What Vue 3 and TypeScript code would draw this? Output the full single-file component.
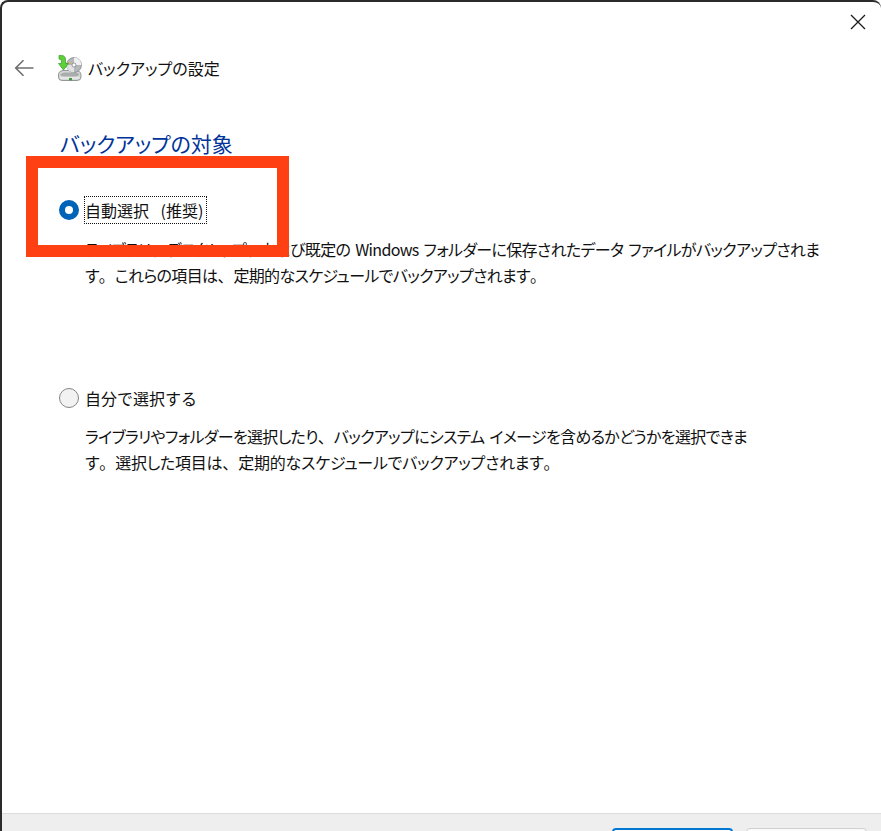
<template>
  <div class="window">
    <div class="close-row">
      <svg class="close" width="16" height="16" viewBox="0 0 16 16">
        <path d="M1 1 L15 15 M15 1 L1 15" stroke="#1a1a1a" stroke-width="1.3" fill="none" />
      </svg>
    </div>

    <div class="title-row">
      <svg class="back" width="20" height="18" viewBox="0 0 20 18">
        <path d="M19.5 9 H2 M9.5 1.2 L1.7 9 L9.5 16.8" stroke="#6f6f6f" stroke-width="1.6" fill="none" />
      </svg>
      <svg class="backup-icon" width="26" height="26" viewBox="0 0 26 26">
        <!-- drive -->
        <path d="M1.5 20 Q1.5 16 6 15.5 H19 Q24 16 24 20 V22 Q24 25.5 20 25.5 H5 Q1.5 25.5 1.5 22 Z" fill="#d5d8d7" stroke="#7d8280" stroke-width="0.8" />
        <path d="M3 19.5 Q5 17.5 8 17.5 H18 Q21 17.5 22.5 19.5 Q21 21.5 18 21.5 H7 Q4 21.5 3 19.5 Z" fill="#a9adac" />
        <path d="M3 23 H22.5" stroke="#f4f5f4" stroke-width="1.2" />
        <rect x="12" y="23" width="3" height="2.4" fill="#3f9a3f" />
        <!-- disc -->
        <circle cx="17" cy="10" r="7.5" fill="#b4b8bb" stroke="#7d8184" stroke-width="0.7" />
        <path d="M17 10 L17 2.5 A7.5 7.5 0 0 1 24.5 10 Z" fill="#eeeff1" />
        <path d="M17 10 L17 17.5 A7.5 7.5 0 0 1 9.5 10 Z" fill="#dfe1e3" />
        <circle cx="17" cy="10" r="2" fill="#fff" stroke="#777" stroke-width="0.7" />
        <circle cx="13" cy="8" r="1" fill="#e0b040" />
        <!-- arrow -->
        <path d="M2 0.5 H4.5 Q8.5 0.5 8.5 5 V8.5 H11.5 L6.5 15 L1.5 8.5 H4.5 V6 Q4.5 4 2 4 Z" fill="#5fd035" stroke="#2f9a2b" stroke-width="0.7" />
      </svg>
      <span class="title">バックアップの設定</span>
    </div>

    <main class="content">
      <h1 class="heading">バックアップの対象</h1>

      <section class="option first">
        <div class="option-head">
          <span class="radio on"></span>
          <span class="label focused">自動選択 (推奨)</span>
        </div>
        <div class="desc">
          <p v-for="line in autoDesc" :key="line" class="line">
            <span v-for="(c, i) in chunks(line)" :key="i" :class="{ punct: isPunct(c) }">{{ c }}</span>
          </p>
        </div>
      </section>

      <section class="option second">
        <div class="option-head">
          <span class="radio"></span>
          <span class="label">自分で選択する</span>
        </div>
        <div class="desc narrow">
          <p v-for="line in manualDesc" :key="line" class="line">
            <span v-for="(c, i) in chunks(line)" :key="i" :class="{ punct: isPunct(c) }">{{ c }}</span>
          </p>
        </div>
      </section>
    </main>

    <footer class="footer">
      <button class="btn primary"></button>
      <button class="btn"></button>
    </footer>

    <!-- annotation frame drawn over the screenshot -->
    <div class="annotation"></div>
  </div>
</template>

<script setup lang="ts">
const autoDesc = [
  'ライブラリ、デスクトップ、および既定の Windows フォルダーに保存されたデータ ファイルがバックアップされま',
  'す。これらの項目は、定期的なスケジュールでバックアップされます。',
]
const manualDesc = [
  'ライブラリやフォルダーを選択したり、バックアップにシステム イメージを含めるかどうかを選択できま',
  'す。選択した項目は、定期的なスケジュールでバックアップされます。',
]

// punctuation keeps its full width, kana stays proportional
const chunks = (text: string): string[] => text.split(/([、。])/).filter(Boolean)
const isPunct = (c: string): boolean => c === '、' || c === '。'
</script>

<style>
html,
body {
  margin: 0;
  background: #fff;
  overflow: hidden;
}
</style>

<style scoped>
.window {
  position: relative;
  width: 881px;
  height: 831px;
  box-sizing: border-box;
  display: flex;
  flex-direction: column;
  background: #fff;
  border-top: 2px solid #2b2b2b;
  border-left: 2px solid #2b2b2b;
  border-top-left-radius: 8px;
  border-top-right-radius: 8px;
  overflow: hidden;
  color: #111;
  font-family: "Noto Sans CJK JP", "Noto Sans", sans-serif;
}
.close-row {
  display: flex;
  justify-content: flex-end;
  height: 28px;
  padding: 12px 15px 0 0;
  box-sizing: border-box;
}
.close {
  display: block;
}
.title-row {
  display: flex;
  align-items: center;
  height: 26px;
  margin-top: 25px;
  padding-left: 12px;
}
.back {
  margin-right: 23px;
}
.backup-icon {
  margin-right: 5px;
}
.title {
  font-size: 16px;
  line-height: 26px;
  font-feature-settings: "palt";
}
.content {
  flex: 1;
  padding: 0 0 0 57px;
}
.heading {
  margin: 46px 0 0 1px;
  font-size: 21px;
  line-height: 32px;
  font-weight: 400;
  color: #003399;
  font-feature-settings: "palt";
}
.option {
  display: flex;
  flex-direction: column;
}
.option.first {
  margin-top: 38px;
}
.option.second {
  margin-top: 97px;
}
.option-head {
  display: flex;
  align-items: center;
  height: 26px;
}
.radio {
  width: 20px;
  height: 20px;
  box-sizing: border-box;
  border-radius: 50%;
  border: 1px solid #858585;
  background: #f2f2f2;
  margin-right: 6px;
}
.radio.on {
  border: 6px solid #0063b8;
  background: #fff;
}
.label {
  font-size: 16px;
  line-height: 26px;
  word-spacing: 8px;
}
.label.focused {
  outline: 1px dotted #111;
  padding: 0 3px 0 0;
}
.desc {
  margin: 13px 0 0 26px;
  font-size: 16px;
  line-height: 26px;
  letter-spacing: -0.66px;
  word-spacing: 2px;
  font-feature-settings: "palt";
}
.desc.narrow {
  margin-top: 12px;
}
.desc.narrow .line:last-child {
  letter-spacing: -0.25px;
}
.line {
  margin: 0;
  white-space: nowrap;
}
.line .punct {
  font-feature-settings: normal;
  letter-spacing: 0;
}
.footer {
  height: 18px;
  box-sizing: border-box;
  flex-shrink: 0;
  display: flex;
  justify-content: flex-end;
  gap: 13px;
  padding: 14px 14px 0 0;
  background: #eeeeee;
  border-top: 1px solid #dcdcdc;
}
.btn {
  width: 121px;
  height: 30px;
  box-sizing: border-box;
  border: 1px solid #cfcfcf;
  border-radius: 4px;
  background: #fbfbfb;
  padding: 0;
}
.btn.primary {
  border: 2px solid #0078d4;
}
.annotation {
  position: absolute;
  left: 24px;
  top: 154px;
  width: 263px;
  height: 101px;
  box-sizing: border-box;
  border: 12px solid #ff4013;
}
</style>
